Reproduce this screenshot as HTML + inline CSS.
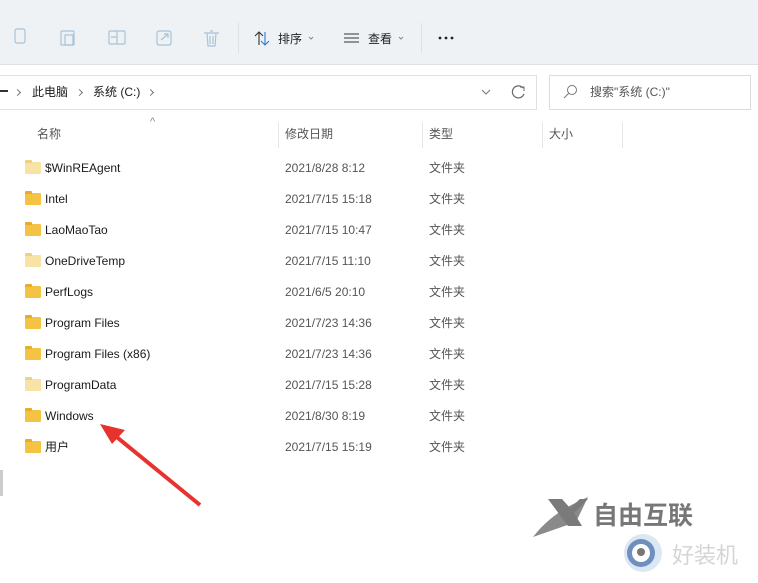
<!DOCTYPE html><html><head><meta charset="utf-8"><style>
body{margin:0;width:758px;height:583px;overflow:hidden;background:#fff;font-family:"Liberation Sans","Noto Sans CJK SC",sans-serif;font-size:12px;line-height:16px;color:#1a1a1a;position:relative}
.a{position:absolute}
.tb{left:0;top:0;width:758px;height:64px;background:#eef2f5;border-bottom:1px solid #dde1e4}
.ic{stroke:#a9c3d6;fill:none;stroke-width:1.2}
.row{position:absolute;left:0;width:758px;height:20px}
.row span{line-height:16px;height:16px}
.fd{position:absolute;left:25px;top:3px;width:16px;height:12px;background:#f4c344;border-radius:1px}
.fd:before{content:"";position:absolute;left:0;top:-2px;width:7px;height:3px;background:#e5ad2a;border-radius:1px 1px 0 0}
.fd.h{background:#f8e2a6}.fd.h:before{background:#efd089}
.n{position:absolute;left:45px;top:1px;color:#1a1a1a}
.d{position:absolute;left:285px;top:1px;color:#555}
.t{position:absolute;left:429px;top:1px;color:#555}
.hd{color:#555;top:126px}
.sep{position:absolute;top:122px;width:1px;height:26px;background:#e6e6e6}
.cv{position:absolute;top:90px;width:4px;height:4px;border-right:1px solid #777;border-bottom:1px solid #777;transform:rotate(-45deg)}
</style></head><body>
<div class="a tb"></div>
<svg class="a" style="left:0;top:0" width="460" height="64">
<rect class="ic" x="15" y="29" width="10" height="14" rx="2"/>
<rect class="ic" x="61" y="31" width="13" height="14" rx="1"/><rect class="ic" x="65" y="35" width="8" height="10"/>
<rect class="ic" x="109" y="31" width="16" height="13" rx="1"/><path class="ic" d="M117 31v13M111 37h6"/>
<rect class="ic" x="157" y="31" width="14" height="14" rx="2"/><path class="ic" d="M161 40l7-6M164 34h4v4"/>
<path class="ic" d="M204 33h15M207 33l1 13h7l1-13M210 31h3M210 36v8M213 36v8"/>
<rect x="238" y="23" width="1" height="30" fill="#dde1e4"/>
<path d="M259 45V32M255 36l4-4 4 4" stroke="#333" fill="none" stroke-width="1.1"/>
<path d="M265 32v13M261 41l4 4 4-4" stroke="#2a7dd2" fill="none" stroke-width="1.1"/>
<text x="278" y="43" font-size="12" fill="#222">排序</text>
<path d="M309 37l2 2 2-2" stroke="#888" fill="none"/>
<path d="M344 34h15M344 38h15M344 42h15" stroke="#333" stroke-width="1"/>
<text x="368" y="43" font-size="12" fill="#222">查看</text>
<path d="M399 37l2 2 2-2" stroke="#888" fill="none"/>
<rect x="421" y="23" width="1" height="30" fill="#dde1e4"/>
<circle cx="440" cy="38" r="1.4" fill="#222"/><circle cx="446" cy="38" r="1.4" fill="#222"/><circle cx="452" cy="38" r="1.4" fill="#222"/>
</svg>
<div class="a" style="left:0;top:75px;width:536px;height:33px;border-top:1px solid #e0e0e0;border-bottom:1px solid #e0e0e0;border-right:1px solid #e0e0e0"></div>
<div class="a" style="left:0;top:90px;width:8px;height:2px;background:#333"></div>
<i class="cv" style="left:15px"></i>
<div class="a" style="left:32px;top:84px">此电脑</div>
<i class="cv" style="left:77px"></i>
<div class="a" style="left:93px;top:84px">系统 (C:)</div>
<i class="cv" style="left:148px"></i>
<svg class="a" style="left:478px;top:82px" width="50" height="20"><path d="M4 8l4 4 4-4" stroke="#777" fill="none"/><path d="M45 6a6 6 0 1 0 1 6" stroke="#666" fill="none" stroke-width="1.2"/><path d="M42 5h4v4" stroke="#666" fill="none"/></svg>
<div class="a" style="left:549px;top:75px;width:200px;height:33px;border:1px solid #dcdcdc"></div>
<svg class="a" style="left:562px;top:84px" width="16" height="16"><circle cx="10" cy="6" r="4.5" stroke="#777" fill="none"/><path d="M7 9l-5 5" stroke="#777"/></svg>
<div class="a" style="left:590px;top:84px;color:#555">搜索"系统 (C:)"</div>
<div class="a" style="left:150px;top:114px;color:#888;font-size:11px">^</div>
<div class="a hd" style="left:37px">名称</div>
<div class="sep" style="left:278px"></div><div class="a hd" style="left:285px">修改日期</div>
<div class="sep" style="left:422px"></div><div class="a hd" style="left:429px">类型</div>
<div class="sep" style="left:542px"></div><div class="a hd" style="left:549px">大小</div>
<div class="sep" style="left:622px"></div>
<div class="row" style="top:159px"><i class="fd h"></i><span class="n">$WinREAgent</span><span class="d">2021/8/28 8:12</span><span class="t">文件夹</span></div>
<div class="row" style="top:190px"><i class="fd"></i><span class="n">Intel</span><span class="d">2021/7/15 15:18</span><span class="t">文件夹</span></div>
<div class="row" style="top:221px"><i class="fd"></i><span class="n">LaoMaoTao</span><span class="d">2021/7/15 10:47</span><span class="t">文件夹</span></div>
<div class="row" style="top:252px"><i class="fd h"></i><span class="n">OneDriveTemp</span><span class="d">2021/7/15 11:10</span><span class="t">文件夹</span></div>
<div class="row" style="top:283px"><i class="fd"></i><span class="n">PerfLogs</span><span class="d">2021/6/5 20:10</span><span class="t">文件夹</span></div>
<div class="row" style="top:314px"><i class="fd"></i><span class="n">Program Files</span><span class="d">2021/7/23 14:36</span><span class="t">文件夹</span></div>
<div class="row" style="top:345px"><i class="fd"></i><span class="n">Program Files (x86)</span><span class="d">2021/7/23 14:36</span><span class="t">文件夹</span></div>
<div class="row" style="top:376px"><i class="fd h"></i><span class="n">ProgramData</span><span class="d">2021/7/15 15:28</span><span class="t">文件夹</span></div>
<div class="row" style="top:407px"><i class="fd"></i><span class="n">Windows</span><span class="d">2021/8/30 8:19</span><span class="t">文件夹</span></div>
<div class="row" style="top:438px"><i class="fd"></i><span class="n">用户</span><span class="d">2021/7/15 15:19</span><span class="t">文件夹</span></div>
<div class="a" style="left:0;top:470px;width:3px;height:26px;background:#ccc"></div>
<svg class="a" style="left:0;top:0" width="758" height="583">
<path d="M200 505L113 434" stroke="#e8322e" stroke-width="4"/>
<path d="M100 424L125 430L112 444Z" fill="#e8322e"/>
<path d="M533 537C550 515 570 505 588 497L576 522Z" fill="#8a8a8a"/>
<path d="M548 499h14l8 9 10-9h8l-14 14 8 13h-14z" fill="#7a7a7a"/>
<text x="593" y="524" font-size="25" font-weight="bold" fill="#777" font-family="Noto Sans CJK SC,sans-serif">自由互联</text>
<circle cx="643" cy="553" r="19" fill="#dbe7f3"/><circle cx="641" cy="553" r="14" fill="#6f8fbf"/><circle cx="641" cy="553" r="9" fill="#fff"/><circle cx="641" cy="552" r="4" fill="#777"/>
<text x="672" y="563" font-size="22" fill="#d5d5d5" font-family="Noto Sans CJK SC,sans-serif">好装机</text>
</svg>
</body></html>
